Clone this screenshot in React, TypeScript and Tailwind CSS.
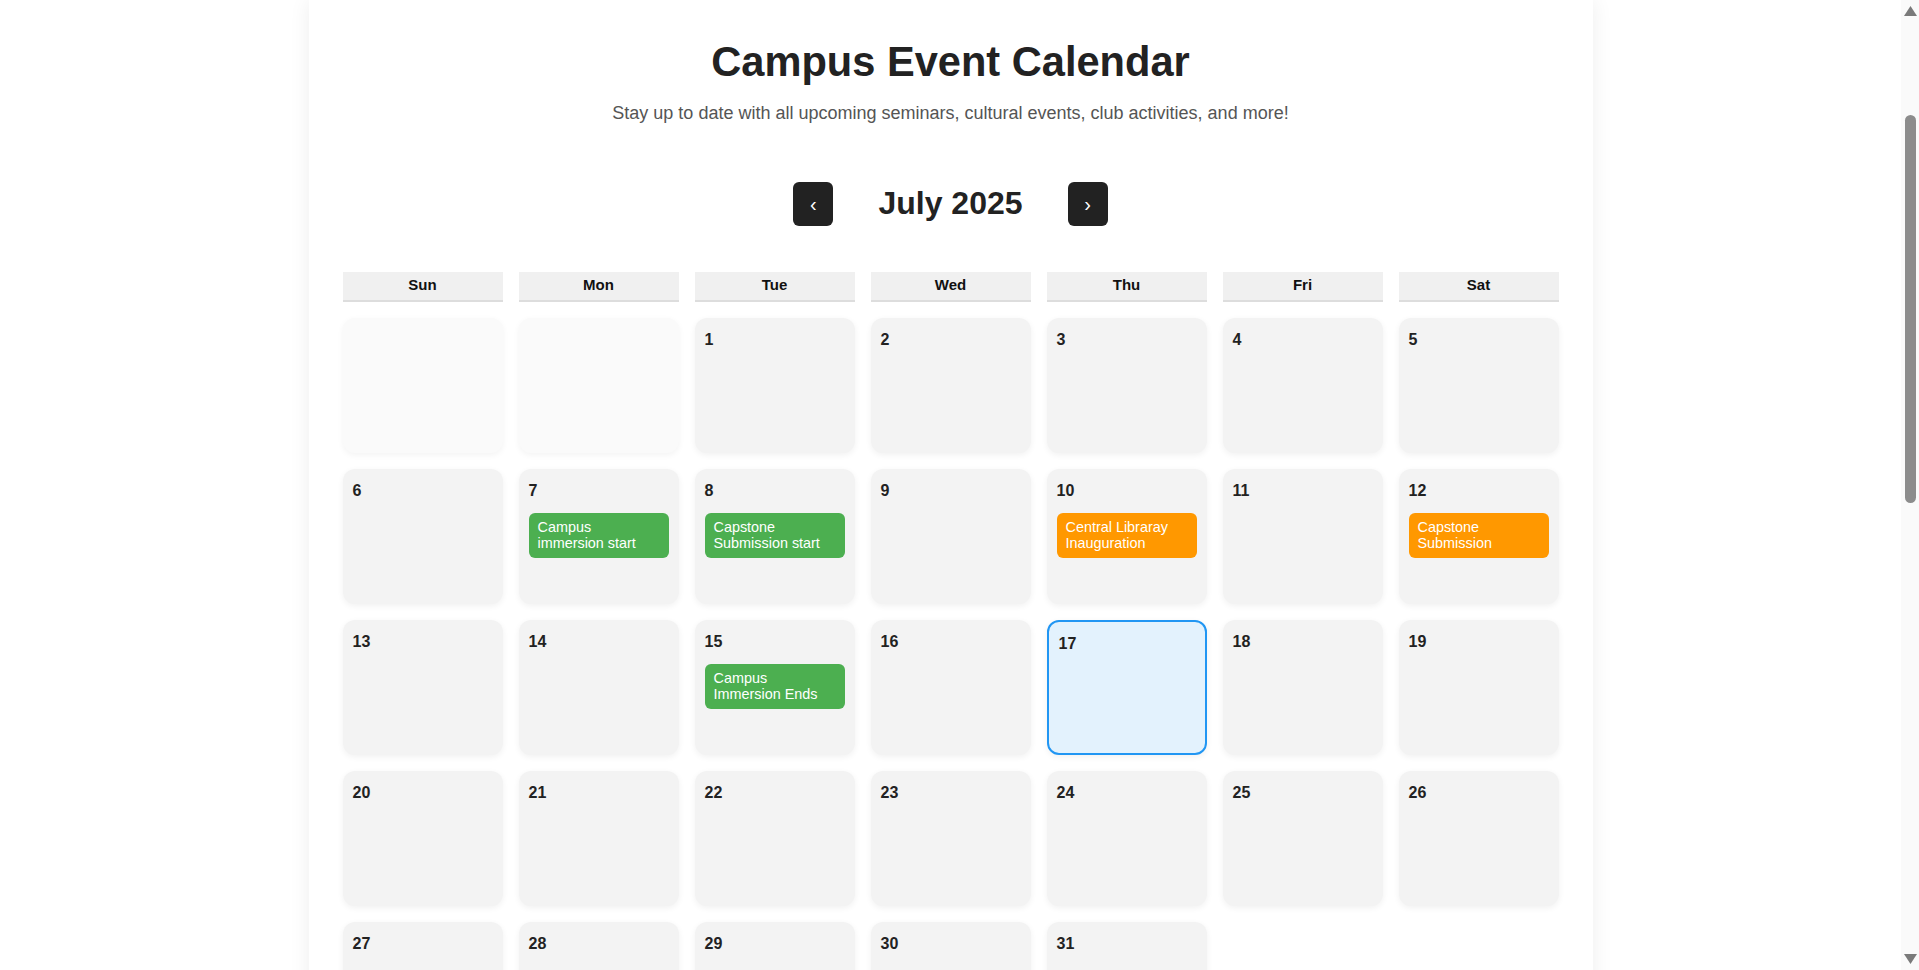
import React from "react";

type Ev = { title: string; color: "green" | "orange" };

const events: Record<number, Ev[]> = {
  7: [{ title: "Campus immersion start", color: "green" }],
  8: [{ title: "Capstone Submission start", color: "green" }],
  10: [{ title: "Central Libraray Inauguration", color: "orange" }],
  12: [{ title: "Capstone Submission", color: "orange" }],
  15: [{ title: "Campus Immersion Ends", color: "green" }],
};

const dayNames = ["Sun", "Mon", "Tue", "Wed", "Thu", "Fri", "Sat"];

function DayCell({ day }: { day: number | null }) {
  if (day === null) {
    return (
      <div className="h-[135px] rounded-[12px] bg-[#fafafa] shadow-[0_2px_6px_rgba(0,0,0,0.05)]" />
    );
  }
  const isToday = day === 17;
  return (
    <div
      className={
        isToday
          ? "h-[135px] rounded-[12px] border-2 border-[#2196f3] bg-[#e3f2fd] p-[10px] shadow-[0_2px_6px_rgba(0,0,0,0.06)]"
          : "h-[135px] rounded-[12px] bg-[#f3f3f3] p-[10px] shadow-[0_2px_6px_rgba(0,0,0,0.06)]"
      }
    >
      <div className="text-[16px] font-bold leading-[24px] text-[#222]">{day}</div>
      {(events[day] || []).map((ev) => (
        <div
          key={ev.title}
          className={
            ev.color === "green"
              ? "mt-[10px] rounded-[6px] bg-[#4caf50] py-[6px] pl-[9px] pr-[12px] text-[14.4px] leading-[1.15] text-white"
              : "mt-[10px] rounded-[6px] bg-[#ff9800] py-[6px] pl-[9px] pr-[12px] text-[14.4px] leading-[1.15] text-white"
          }
        >
          {ev.title}
        </div>
      ))}
    </div>
  );
}

function FakeScrollbar() {
  return (
    <div className="fixed top-0 right-0 h-screen w-[18px] bg-[#fafafa]">
      <svg className="absolute top-[6px] left-[3px]" width="13" height="10" viewBox="0 0 13 10">
        <polygon points="6.5,0 13,10 0,10" fill="#7a7a7a" />
      </svg>
      <div className="absolute top-[115px] left-[4px] h-[388px] w-[11px] rounded-full bg-[#8c8c8c]" />
      <svg className="absolute bottom-[6px] left-[3px]" width="13" height="10" viewBox="0 0 13 10">
        <polygon points="0,0 13,0 6.5,10" fill="#7a7a7a" />
      </svg>
    </div>
  );
}

export default function App() {
  const cells: (number | null)[] = [null, null];
  for (let d = 1; d <= 31; d++) cells.push(d);

  return (
    <div className="min-h-screen bg-white font-['Liberation_Sans',Arial,sans-serif]">
      <div className="mr-[18px]">
        <div className="mx-auto w-[1284px] bg-white px-[34px] pt-[38px] pb-[60px] shadow-[0_0_20px_rgba(0,0,0,0.07)]">
          <h1 className="text-center text-[41.6px] font-bold leading-[1.15] text-[#222]">
            Campus Event Calendar
          </h1>
          <p className="mt-[17px] text-center text-[18px] leading-[1.15] text-[#555]">
            Stay up to date with all upcoming seminars, cultural events, club activities, and more!
          </p>

          <div className="mt-[58px] flex items-center justify-center gap-[45px]">
            <button className="flex h-[44px] w-[40px] items-center justify-center rounded-[6px] bg-[#222] text-[20px] text-white">
              ‹
            </button>
            <h2 className="text-[32px] font-bold leading-[1.15] text-[#222]">July 2025</h2>
            <button className="flex h-[44px] w-[40px] items-center justify-center rounded-[6px] bg-[#222] text-[20px] text-white">
              ›
            </button>
          </div>

          <div className="mx-auto mt-[46px] grid w-[1216px] grid-cols-[repeat(7,160px)] gap-[16px]">
            {dayNames.map((n) => (
              <div
                key={n}
                className="flex h-[30px] items-center justify-center border-b-2 border-[#ddd] bg-[#f0f0f0] text-[15px] font-bold text-[#111]"
              >
                {n}
              </div>
            ))}
            {cells.map((d, i) => (
              <DayCell key={i} day={d} />
            ))}
          </div>
        </div>
      </div>
      <FakeScrollbar />
    </div>
  );
}
